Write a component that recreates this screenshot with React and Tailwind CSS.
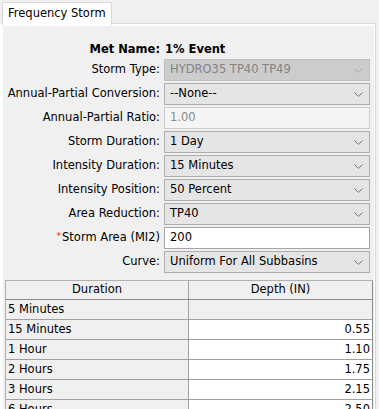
const font = { fontFamily: '"DejaVu Sans", Tahoma, sans-serif' };

function Chevron({ disabled }) {
  return (
    <svg width="9" height="5" viewBox="0 0 9 5" className="shrink-0">
      <polyline points="0.5,0.5 4.5,4.5 8.5,0.5" fill="none" stroke={disabled ? '#ababab' : '#707070'} strokeWidth="1" />
    </svg>
  );
}

function Combo({ value, disabled }) {
  return (
    <div
      className={
        disabled
          ? 'h-[22px] flex items-center justify-between pl-[5px] pr-[6px] border border-[#bfbfbf] bg-[#cccccc] text-[#838383]'
          : 'h-[22px] flex items-center justify-between pl-[5px] pr-[6px] border border-[#adadad] bg-[#e5e5e5] text-black'
      }
    >
      <span>{value}</span>
      <Chevron disabled={disabled} />
    </div>
  );
}

function Field({ value, disabled }) {
  return (
    <div
      className={
        disabled
          ? 'h-[22px] flex items-center pl-[5px] border border-[#cccccc] bg-[#f5f5f5] text-[#8a8a8a]'
          : 'h-[22px] flex items-center pl-[5px] border border-[#a5a5a5] bg-white text-black'
      }
    >
      {value}
    </div>
  );
}

const rows = [
  { label: 'Storm Type:', el: <Combo value="HYDRO35 TP40 TP49" disabled /> },
  { label: 'Annual-Partial Conversion:', el: <Combo value="--None--" /> },
  { label: 'Annual-Partial Ratio:', el: <Field value="1.00" disabled /> },
  { label: 'Storm Duration:', el: <Combo value="1 Day" /> },
  { label: 'Intensity Duration:', el: <Combo value="15 Minutes" /> },
  { label: 'Intensity Position:', el: <Combo value="50 Percent" /> },
  { label: 'Area Reduction:', el: <Combo value="TP40" /> },
  { label: 'Storm Area (MI2)', req: true, el: <Field value="200" /> },
  { label: 'Curve:', el: <Combo value="Uniform For All Subbasins" /> },
];

const depths = [
  ['5 Minutes', null],
  ['15 Minutes', '0.55'],
  ['1 Hour', '1.10'],
  ['2 Hours', '1.75'],
  ['3 Hours', '2.15'],
  ['6 Hours', '2.50'],
];

export default function App() {
  return (
    <div className="w-[379px] h-[409px] overflow-hidden bg-[#f0f0f0] text-[11.5px] text-black" style={font}>
      {/* tab strip */}
      <div className="flex h-[24px] pt-[2px] pl-[2px]">
        <div className="w-[110px] h-[23px] bg-white border border-b-0 border-[#d9d9d9] pl-[5px] flex items-center">
          Frequency Storm
        </div>
        <div className="flex-1 border-b border-[#d9d9d9] mr-[3px]" />
      </div>

      {/* tab pane */}
      <div className="w-[376px] h-[400px] bg-white border-r border-[#d9d9d9] pl-[3px] pt-[2px] pr-[1px]">
        <div className="h-full bg-[#f0f0f0] pt-[13px]">
          <div className="grid grid-cols-[157px_206px] gap-x-[4px] gap-y-[2px] items-center">
            <div className="h-[18px] pt-[3px] flex items-center justify-end font-bold">Met Name:</div>
            <div className="h-[18px] pt-[3px] flex items-center font-bold pl-[1px]">1% Event</div>
            {rows.map((r) => (
              <div key={r.label} className="contents">
                <div className="flex items-center justify-end whitespace-nowrap">
                  {r.req && <span className="text-[#e02020] text-[9px] mr-[1px] -mt-[3px]">*</span>}
                  {r.label}
                </div>
                {r.el}
              </div>
            ))}
          </div>

          {/* table */}
          <div className="mt-[7px] ml-[2px] w-[368px] border-l border-t border-[#b0b0b0] bg-white">
            <div className="flex h-[19px] bg-[#f0f0f0] border-b border-[#8a8a8a]">
              <div className="w-[183px] flex items-center justify-center border-r border-[#a0a0a0]">Duration</div>
              <div className="flex-1 flex items-center justify-center border-r border-[#8a8a8a]">Depth (IN)</div>
            </div>
            {depths.map(([d, v]) => (
              <div key={d} className="flex h-[20px] border-b border-[#a0a0a0]">
                <div className="w-[183px] bg-[#f0f0f0] flex items-center pl-[2px] border-r border-[#a0a0a0]">{d}</div>
                <div
                  className={
                    v
                      ? 'flex-1 bg-white flex items-center justify-end pr-[2px] border-r border-[#8a8a8a]'
                      : 'flex-1 bg-[#f0f0f0] flex items-center justify-end pr-[2px] border-r border-[#8a8a8a]'
                  }
                >
                  {v}
                </div>
              </div>
            ))}
          </div>
        </div>
      </div>
    </div>
  );
}
